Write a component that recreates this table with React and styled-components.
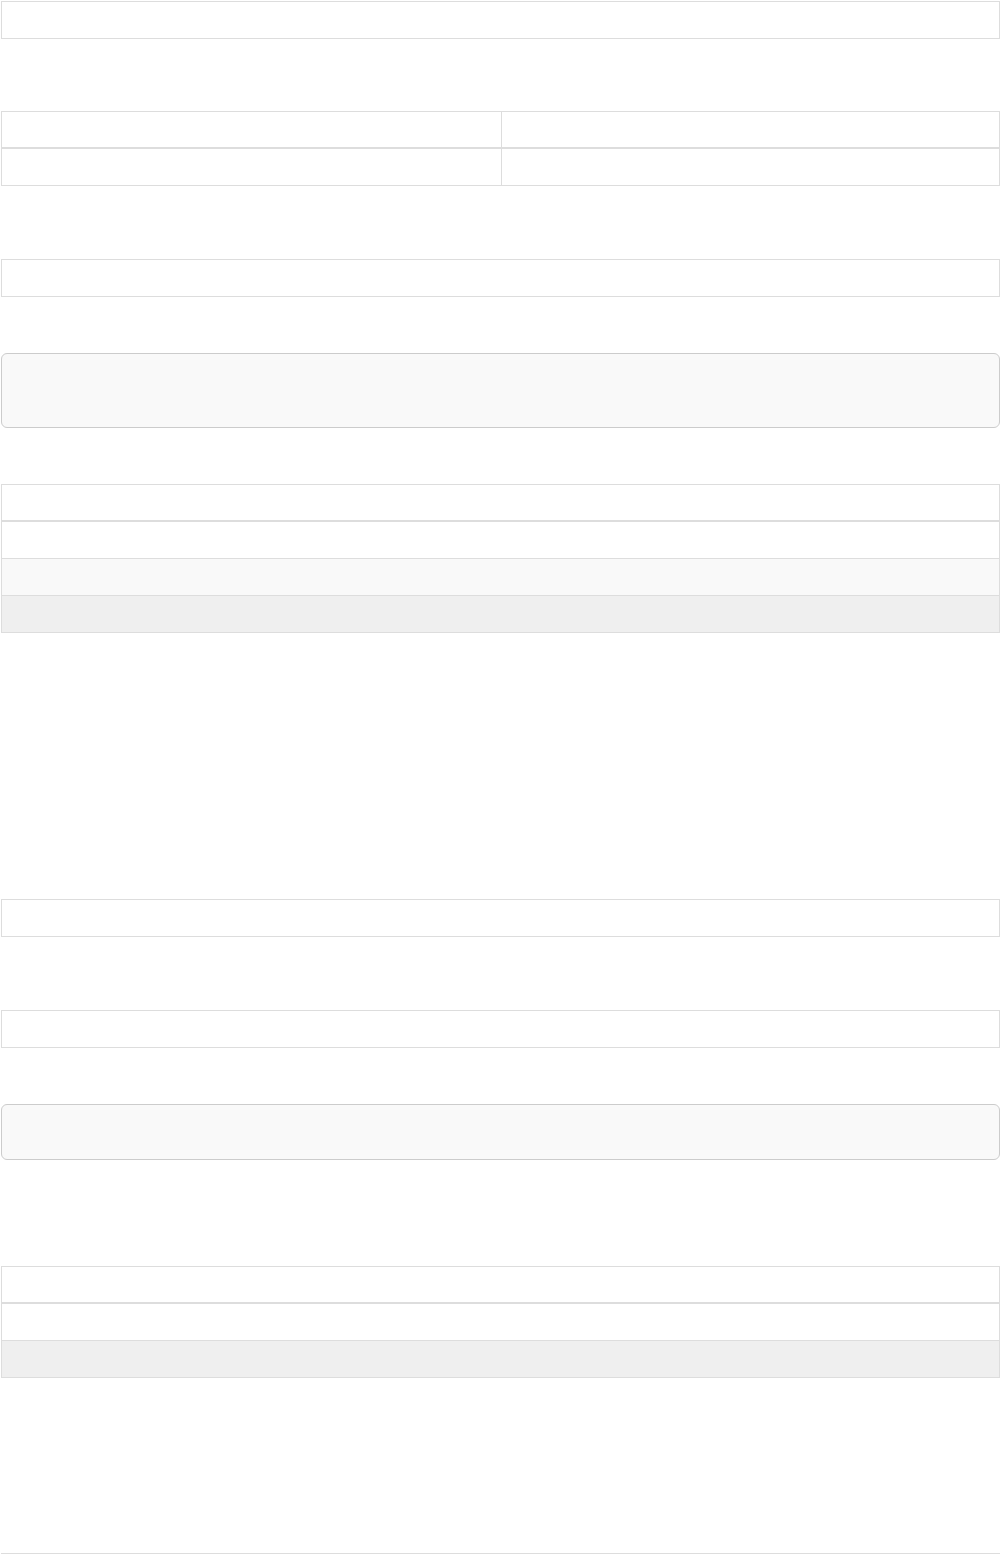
import React from "react";
import styled, { createGlobalStyle } from "styled-components";

const GlobalStyle = createGlobalStyle`
  html, body {
    margin: 0;
    padding: 0;
    background: #ffffff;
    font-family: "Liberation Sans", Arial, sans-serif;
    font-size: 14px;
    color: #333333;
  }
`;

const Page = styled.div`
  padding: 1px 0 0 1px;
  height: 1554px;
  box-sizing: border-box;
  overflow: hidden;
`;

const Table = styled.div`
  margin-top: ${(p) => p.$gap || 0}px;
  border: 1px solid #dddddd;
  box-sizing: border-box;
`;

const Row = styled.div`
  display: grid;
  grid-template-columns: repeat(${(p) => p.$cols || 1}, 1fr);
  height: 36px;
  background: ${(p) => p.$bg || "#ffffff"};
  & + & {
    border-top: 1px solid #dddddd;
  }
`;

const HeadRow = styled(Row)`
  height: 35px;
  border-bottom: 2px solid #dddddd;
  & + ${Row} {
    border-top: none;
  }
`;

const Cell = styled.div`
  padding: 8px;
  & + & {
    border-left: 1px solid #dddddd;
  }
`;

const CodeBlock = styled.div`
  margin-top: ${(p) => p.$gap || 0}px;
  height: ${(p) => p.$height}px;
  background: #f9f9f9;
  border: 1px solid #cccccc;
  border-radius: 6px;
  box-sizing: border-box;
`;

const Rule = styled.div`
  margin-top: ${(p) => p.$gap || 0}px;
  border-top: 1px solid #dddddd;
`;

const cells = (n) =>
  Array.from({ length: n }, (_, i) => <Cell key={i} />);

const App = () => {
  return (
    <>
      <GlobalStyle />
      <Page>
        <Table>
          <Row>{cells(1)}</Row>
        </Table>

        <Table $gap={72}>
          <HeadRow $cols={2}>{cells(2)}</HeadRow>
          <Row $cols={2}>{cells(2)}</Row>
        </Table>

        <Table $gap={73}>
          <Row>{cells(1)}</Row>
        </Table>

        <CodeBlock $gap={56} $height={75} />

        <Table $gap={56}>
          <HeadRow>{cells(1)}</HeadRow>
          <Row>{cells(1)}</Row>
          <Row $bg="#f9f9f9">{cells(1)}</Row>
          <Row $bg="#efefef">{cells(1)}</Row>
        </Table>

        <Table $gap={266}>
          <Row>{cells(1)}</Row>
        </Table>

        <Table $gap={73}>
          <Row>{cells(1)}</Row>
        </Table>

        <CodeBlock $gap={56} $height={56} />

        <Table $gap={106}>
          <HeadRow>{cells(1)}</HeadRow>
          <Row>{cells(1)}</Row>
          <Row $bg="#efefef">{cells(1)}</Row>
        </Table>

        <Rule $gap={175} />
      </Page>
    </>
  );
};

export default App;
